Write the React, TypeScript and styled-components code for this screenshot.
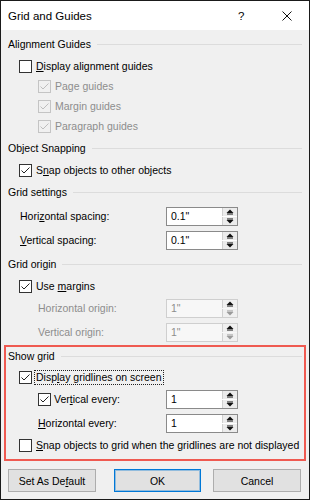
import React from 'react'
import styled, { createGlobalStyle } from 'styled-components'

const GlobalStyle = createGlobalStyle`
  html, body {
    margin: 0;
    padding: 0;
    background: #fff;
  }
  body {
    font-family: 'Liberation Sans', Arial, sans-serif;
  }
`

const Check = ({ on, disabled }: { on?: boolean; disabled?: boolean }) => (
  <Box $disabled={disabled}>
    {on && (
      <svg width="11" height="11" viewBox="0 0 11 11">
        <path
          d="M1.5 5.5 L4 8 L9.5 2.5"
          fill="none"
          stroke={disabled ? '#bdbdbd' : '#222'}
          strokeWidth="1"
        />
      </svg>
    )}
  </Box>
)

const Arrow = ({ dir, dim }: { dir: 'up' | 'down'; dim?: boolean }) => (
  <svg width="8" height="6" viewBox="0 0 8 6">
    {dir === 'up' ? (
      <>
        <polygon points="0.5,4 4,0.5 7.5,4" fill={dim ? '#9a9a9a' : '#111'} />
        <rect x="1" y="4.5" width="6" height="1" fill={dim ? '#9a9a9a' : '#111'} />
      </>
    ) : (
      <>
        <rect x="1" y="0.5" width="6" height="1" fill={dim ? '#9a9a9a' : '#111'} />
        <polygon points="0.5,2 4,5.5 7.5,2" fill={dim ? '#9a9a9a' : '#111'} />
      </>
    )}
  </svg>
)

const Spinner = ({ value, disabled }: { value: string; disabled?: boolean }) => (
  <Spin $disabled={disabled}>
    <SpinText>{value}</SpinText>
    <SpinButtons>
      <SpinButton $disabled={disabled}>
        <Arrow dir="up" />
      </SpinButton>
      <SpinButton $disabled={disabled}>
        <Arrow dir="down" dim={disabled} />
      </SpinButton>
    </SpinButtons>
  </Spin>
)

const App = () => {
  return (
    <>
      <GlobalStyle />
      <Window>
        <TitleBar>
          <Title>Grid and Guides</Title>
          <Help>?</Help>
          <Close>
            <svg width="10" height="10" viewBox="0 0 10 10">
              <path d="M0.5 0.5 L9.5 9.5 M9.5 0.5 L0.5 9.5" stroke="#111" strokeWidth="1" />
            </svg>
          </Close>
        </TitleBar>

        <Body>
          <SectionTitle>Alignment Guides</SectionTitle>
          <CheckRow $indent={11}>
            <Check />
            <span>
              <u>D</u>isplay alignment guides
            </span>
          </CheckRow>
          <CheckRow $indent={30} $disabled>
            <Check on disabled />
            <span>Page guides</span>
          </CheckRow>
          <CheckRow $indent={30} $disabled>
            <Check on disabled />
            <span>Margin guides</span>
          </CheckRow>
          <CheckRow $indent={30} $disabled>
            <Check on disabled />
            <span>Paragraph guides</span>
          </CheckRow>

          <SectionTitle>Object Snapping</SectionTitle>
          <CheckRow $indent={11}>
            <Check on />
            <span>
              S<u>n</u>ap objects to other objects
            </span>
          </CheckRow>

          <SectionTitle>Grid settings</SectionTitle>
          <FieldRow>
            <FieldLabel $indent={12}>
              <span>
                Hori<u>z</u>ontal spacing:
              </span>
            </FieldLabel>
            <Spinner value={'0.1"'} />
          </FieldRow>
          <FieldRow>
            <FieldLabel $indent={12}>
              <span>
                <u>V</u>ertical spacing:
              </span>
            </FieldLabel>
            <Spinner value={'0.1"'} />
          </FieldRow>

          <SectionTitle>Grid origin</SectionTitle>
          <CheckRow $indent={11}>
            <Check on />
            <span>
              Use <u>m</u>argins
            </span>
          </CheckRow>
          <FieldRow>
            <FieldLabel $indent={30} $disabled>
              <span>Horizontal origin:</span>
            </FieldLabel>
            <Spinner value={'1"'} disabled />
          </FieldRow>
          <FieldRow>
            <FieldLabel $indent={30} $disabled>
              <span>Vertical origin:</span>
            </FieldLabel>
            <Spinner value={'1"'} disabled />
          </FieldRow>

          <Highlight>
            <SectionTitle $h={18}>Show grid</SectionTitle>
            <CheckRow $indent={11} $top={2}>
              <Check on />
              <Focused>
                Disp<u>l</u>ay gridlines on screen
              </Focused>
            </CheckRow>
            <FieldRow>
              <FieldLabel $indent={30}>
                <Check on />
                <span>
                  Ver<u>t</u>ical every:
                </span>
              </FieldLabel>
              <Spinner value="1" />
            </FieldRow>
            <FieldRow>
              <FieldLabel $indent={30}>
                <span>
                  <u>H</u>orizontal every:
                </span>
              </FieldLabel>
              <Spinner value="1" />
            </FieldRow>
            <CheckRow $indent={11}>
              <Check />
              <span>
                <u>S</u>nap objects to grid when the gridlines are not displayed
              </span>
            </CheckRow>
          </Highlight>
        </Body>

        <Footer>
          <Button>
            <span>
              Set As De<u>f</u>ault
            </span>
          </Button>
          <PrimaryButton>OK</PrimaryButton>
          <Button>Cancel</Button>
        </Footer>
      </Window>
    </>
  )
}

export default App

const Window = styled.div`
  width: 310px;
  height: 500px;
  box-sizing: border-box;
  border: 1px solid #1a1a1a;
  background: #f0f0f0;
  display: flex;
  flex-direction: column;
  font-size: 10.5px;
  color: #000;
`

const TitleBar = styled.div`
  height: 29px;
  flex-shrink: 0;
  background: #fff;
  display: flex;
  align-items: center;
  padding: 0 17px 0 7px;
`

const Title = styled.div`
  flex: 1;
  font-size: 11.5px;
  color: #000;
`

const Help = styled.div`
  font-size: 11.5px;
  width: 6px;
  margin-right: 38px;
`

const Close = styled.div`
  width: 10px;
  height: 10px;
  display: flex;
`

const Body = styled.div`
  padding: 2px 7px 0;
  display: flex;
  flex-direction: column;
`

const SectionTitle = styled.div<{ $h?: number }>`
  height: ${({ $h }) => $h ?? 24}px;
  display: flex;
  align-items: center;
  white-space: nowrap;

  &::after {
    content: '';
    flex: 1;
    height: 1px;
    background: #dcdcdc;
    margin-left: 6px;
  }
`

const Box = styled.span<{ $disabled?: boolean }>`
  width: 13px;
  height: 13px;
  box-sizing: border-box;
  border: 1px solid ${({ $disabled }) => ($disabled ? '#c4c4c4' : '#333')};
  background: ${({ $disabled }) => ($disabled ? '#f0f0f0' : '#fff')};
  display: inline-flex;
  align-items: center;
  justify-content: center;
  flex-shrink: 0;
`

const CheckRow = styled.div<{ $indent: number; $disabled?: boolean; $top?: number }>`
  height: 20px;
  display: flex;
  align-items: center;
  gap: 4px;
  padding-left: ${({ $indent }) => $indent}px;
  margin-top: ${({ $top }) => $top ?? 0}px;
  color: ${({ $disabled }) => ($disabled ? '#8d8d8d' : '#000')};
  white-space: nowrap;
`

const Focused = styled.span`
  outline: 1px dotted #222;
  outline-offset: 0;
  padding: 0 1px;
  margin-left: -1px;
  line-height: 13px;
`

const FieldRow = styled.div`
  height: 24px;
  display: grid;
  grid-template-columns: 158px 72px;
  align-items: center;
`

const FieldLabel = styled.div<{ $indent: number; $disabled?: boolean }>`
  display: flex;
  align-items: center;
  gap: 3px;
  padding-left: ${({ $indent }) => $indent}px;
  color: ${({ $disabled }) => ($disabled ? '#8d8d8d' : '#000')};
  white-space: nowrap;
`

const Spin = styled.div<{ $disabled?: boolean }>`
  width: 72px;
  height: 19px;
  box-sizing: border-box;
  border: 1px solid ${({ $disabled }) => ($disabled ? '#cfcfcf' : '#8a8a8a')};
  background: ${({ $disabled }) => ($disabled ? '#f7f7f7' : '#fff')};
  color: ${({ $disabled }) => ($disabled ? '#8d8d8d' : '#000')};
  display: flex;
`

const SpinText = styled.div`
  flex: 1;
  padding-left: 4px;
  display: flex;
  align-items: center;
`

const SpinButtons = styled.div`
  width: 15px;
  display: flex;
  flex-direction: column;
  gap: 1px;
`

const SpinButton = styled.div<{ $disabled?: boolean }>`
  flex: 1;
  display: flex;
  align-items: center;
  justify-content: center;
  background: ${({ $disabled }) => ($disabled ? '#f0f0f0' : '#ececec')};
  border-left: 1px solid #d0d0d0;
`

const Highlight = styled.div`
  margin: 1px -4px 0;
  border: 2px solid #ef5a51;
  padding: 0 2px 4px;
  display: flex;
  flex-direction: column;
`

const Footer = styled.div`
  display: flex;
  padding: 8px 7px 0;
`

const Button = styled.div`
  width: 88px;
  height: 23px;
  box-sizing: border-box;
  border: 1px solid #adadad;
  background: #e1e1e1;
  display: flex;
  align-items: center;
  justify-content: center;
  white-space: nowrap;
`

const PrimaryButton = styled(Button)`
  width: 87px;
  margin: 0 12px 0 18px;
  border: 1px solid #0078d7;
  box-shadow: inset 0 0 0 1px rgba(0, 120, 215, 0.35);
`
